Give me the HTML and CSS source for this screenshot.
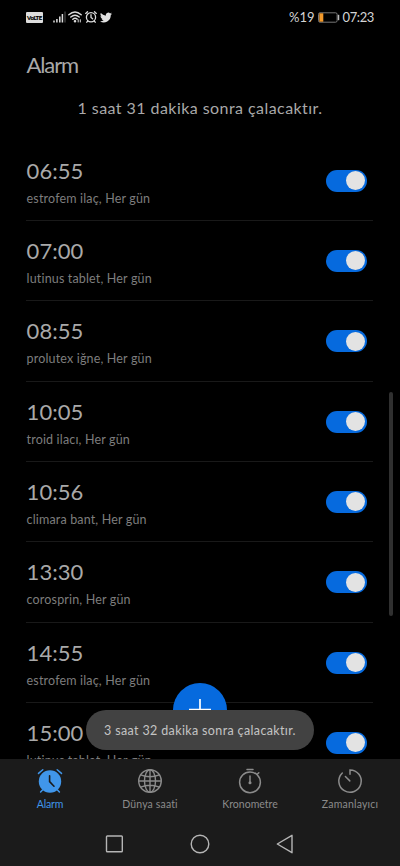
FILE: index.html
```html
<!DOCTYPE html>
<html lang="tr">
<head>
<meta charset="utf-8">
<meta name="viewport" content="width=device-width, initial-scale=1">
<title>Alarm</title>
<link rel="stylesheet" href="styles.css">
</head>
<body>
<div class="screen">
  <header class="status">
    <div class="status-left">
      <span class="volte">VoLTE</span>
      <svg class="signal" width="13" height="12" viewBox="0 0 13 12"><path d="M1 9.5V11.5M3.9 8V11.5M6.8 5.5V11.5M9.4 3V11.5" stroke="#ddd" stroke-width="1.5"/><path d="M12 .5V11.5" stroke="#444" stroke-width="1.3"/></svg>
      <svg class="wifi" width="14" height="12" viewBox="0 0 14 12" fill="none" stroke="#ddd" stroke-width="1.4" stroke-linecap="round"><path d="M.8 3.7Q7-1.7 13.2 3.7M2.8 6Q7 2.4 11.2 6M4.8 8.3Q7 6.4 9.2 8.1"/><circle cx="7" cy="10.3" r=".6" fill="#ddd"/><path d="M10.2 8.7V11M12.3 8.7V11" stroke-width="1"/></svg>
      <svg class="mini-alarm" width="12" height="12" viewBox="0 0 12 12" fill="none" stroke="#ddd" stroke-width="1.3" stroke-linecap="round"><circle cx="6" cy="6.3" r="4.6"/><path d="M6 3.7V6.4L7.6 7.8M.7 2.4L2.5.8M11.3 2.4L9.5.8M2.8 10L1.8 11.2M9.2 10L10.2 11.2"/></svg>
      <svg class="bird" width="12" height="11" viewBox="0 2 24 20" fill="#e2e2e2"><path d="M24 4.6a10 10 0 0 1-2.8.8 5 5 0 0 0 2.1-2.7 10 10 0 0 1-3.1 1.2 4.9 4.9 0 0 0-8.4 4.5A14 14 0 0 1 1.7 3.2a4.9 4.9 0 0 0 1.5 6.5 5 5 0 0 1-2.2-.6 4.9 4.9 0 0 0 3.9 4.9 5 5 0 0 1-2.2.1 4.9 4.9 0 0 0 4.6 3.4A10 10 0 0 1 0 19.500a14 14 0 0 0 21.500-12.400A10 10 0 0 0 24 4.600z"/></svg>
    </div>
    <div class="status-right">
      <span class="percent">%19</span>
      <svg width="22" height="11" viewBox="0 0 22 11"><rect x=".5" y=".8" width="18.600" height="9.400" rx="1.500" fill="none" stroke="#777"/><rect x="1.300" y="1.300" width="4" height="8.400" fill="#f39a2b"/><path d="M20.500 2.800V8.200" stroke="#bbb" stroke-width="1.500"/></svg>
      <span class="clock">07:23</span>
    </div>
  </header>
  <h1 class="title">Alarm</h1>
  <p class="next"><span>1 saat 31 dakika sonra çalacaktır.</span></p>
  <main class="list">
    <section class="row"><div><div class="time">06:55</div><div class="label">estrofem ilaç, Her gün</div></div><span class="switch"></span></section>
    <section class="row"><div><div class="time">07:00</div><div class="label">lutinus tablet, Her gün</div></div><span class="switch"></span></section>
    <section class="row"><div><div class="time">08:55</div><div class="label">prolutex iğne, Her gün</div></div><span class="switch"></span></section>
    <section class="row"><div><div class="time">10:05</div><div class="label">troid ilacı, Her gün</div></div><span class="switch"></span></section>
    <section class="row"><div><div class="time">10:56</div><div class="label">climara bant, Her gün</div></div><span class="switch"></span></section>
    <section class="row"><div><div class="time">13:30</div><div class="label">corosprin, Her gün</div></div><span class="switch"></span></section>
    <section class="row"><div><div class="time">14:55</div><div class="label">estrofem ilaç, Her gün</div></div><span class="switch"></span></section>
    <section class="row"><div><div class="time">15:00</div><div class="label">lutinus tablet, Her gün</div></div><span class="switch"></span></section>
  </main>
  <nav class="tabs">
    <div class="tab active">
      <svg width="28" height="28" viewBox="0 0 28 28" fill="none" stroke="#4096ea" stroke-width="1.500" stroke-linecap="round"><circle cx="14" cy="14.500" r="11.200" fill="#4096ea" stroke="none"/><path d="M2.500 6.400L6.800 2.700M25.500 6.400L21.200 2.700M6.500 23L4.600 25M21.500 23L23.400 25"/><path d="M13.600 8.800V14.600L18 19.200" stroke="#1b1b1b" stroke-width="1.600"/></svg>
      <span class="tab-alarm">Alarm</span>
    </div>
    <div class="tab">
      <svg width="28" height="28" viewBox="0 0 28 28" fill="none" stroke="#8b8b8b" stroke-width="1.400"><circle cx="14" cy="14" r="11.300"/><ellipse cx="14" cy="14" rx="5.500" ry="11.300"/><path d="M14 2.700V25.300M2.700 14H25.300M4.600 7.900Q14 11.500 23.400 7.900M4.600 20.100Q14 16.500 23.400 20.100"/></svg>
      <span class="tab-world">Dünya saati</span>
    </div>
    <div class="tab">
      <svg width="28" height="28" viewBox="0 0 28 28" fill="none" stroke="#8b8b8b" stroke-width="1.500" stroke-linecap="round"><circle cx="14" cy="15.300" r="10.400"/><path d="M11 2.500H17M14 9V15M21.500 7L22.800 5.700"/><circle cx="14" cy="15.700" r=".8" fill="#8b8b8b"/></svg>
      <span>Kronometre</span>
    </div>
    <div class="tab">
      <svg width="28" height="28" viewBox="0 0 28 28" fill="none" stroke="#8b8b8b" stroke-width="1.500" stroke-linecap="round"><path d="M14 7.300V2.900A11.200 11.200 0 1 1 6.300 6M9.400 9.500L13.800 13.900"/></svg>
      <span class="tab-timer">Zamanlayıcı</span>
    </div>
  </nav>
  <footer class="keys">
    <svg width="20" height="20" viewBox="0 0 20 20" fill="none" stroke="#b5b5b5" stroke-width="1.400"><rect x="1.500" y="2" width="15.800" height="15.800" rx=".8"/></svg>
    <svg width="20" height="20" viewBox="0 0 20 20" fill="none" stroke="#b5b5b5" stroke-width="1.400"><circle cx="10" cy="10" r="8.800"/></svg>
    <svg width="20" height="20" viewBox="0 0 20 20" fill="none" stroke="#b5b5b5" stroke-width="1.400" stroke-linejoin="round"><path d="M1.300 10L16 1.300V18.700Z"/></svg>
  </footer>
  <div class="fab"><svg width="24" height="24" viewBox="0 0 24 24"><path d="M12 1V23M1 11.500H23" stroke="#fff" stroke-width="1.700"/></svg></div>
  <div class="toast">3 saat 32 dakika sonra çalacaktır.</div>
  <div class="scrollbar"></div>
</div>
</body>
</html>
```
FILE: styles.css
```css
* { box-sizing: border-box; }
body { margin: 0; background: #000; font-family: Lato, "Noto Sans", sans-serif; font-variant-ligatures: none; }
.screen {
  position: relative;
  display: flex;
  flex-direction: column;
  width: 400px;
  height: 866px;
  overflow: hidden;
  background: #000;
  color: #a9a9a9;
  white-space: nowrap;
}
svg { display: block; flex: none; }

.status {
  display: flex;
  justify-content: space-between;
  align-items: center;
  height: 34px;
  padding: 0 26px;
  color: #d4d4d4;
  flex: none;
}
.status-left, .status-right { display: flex; align-items: center; }
.volte {
  width: 17px;
  height: 11px;
  margin-right: 10px;
  border-radius: 1px;
  background: #ddd;
  color: #000;
  font: 900 6px/11px Lato, sans-serif;
  letter-spacing: -0.4px;
  text-align: center;
  -webkit-text-stroke: 0.15px #000;
}
.signal { margin-right: 2px; }
.wifi { margin-right: 3px; }
.mini-alarm { margin-right: 3px; }
.percent { font-size: 13px; margin-right: 3px; }
.clock { font-size: 13px; margin-left: 3px; letter-spacing: -0.4px; }

.title {
  flex: none;
  margin: 17px 0 0 26.500px;
  height: 28px;
  font-size: 22px;
  line-height: 28px;
  font-weight: 400;
  letter-spacing: -1.1px;
}
.next {
  flex: none;
  margin: 19px 0 0;
  height: 20px;
  font-size: 16px;
  line-height: 20px;
  letter-spacing: 0.440px;
  text-align: center;
}

.list {
  flex: 1 1 0;
  min-height: 0;
  overflow: hidden;
  padding: 22.600px 27px 0 26px;
}
.row {
  display: flex;
  justify-content: space-between;
  height: 80.330px;
  padding: 16px 6px 0 0.600px;
  border-bottom: 1px solid #191919;
}
.time { font-size: 22px; line-height: 28px; letter-spacing: 0.05px; }
.label { margin-top: 5px; font-size: 12.500px; line-height: 18px; letter-spacing: 0.16px; color: #7d7d7d; }
.switch {
  display: flex;
  justify-content: flex-end;
  width: 41px;
  height: 22px;
  margin-top: 13px;
  padding: 1.500px 2px;
  border-radius: 11px;
  background: #066ade;
}
.switch::before {
  content: "";
  width: 19px;
  height: 19px;
  border-radius: 50%;
  background: #e3e3e3;
}

.tabs {
  flex: none;
  display: grid;
  grid-template-columns: repeat(4, 1fr);
  height: 61px;
  padding-top: 8px;
  background: #1b1b1b;
  color: #8b8b8b;
}
.tab { display: flex; flex-direction: column; align-items: center; font-size: 10.500px; line-height: 14px; gap: 2px; }
.active { color: #4096ea; }
.tab-alarm { letter-spacing: -0.15px; }
.tab-world { letter-spacing: 0.15px; }
.tab-timer { letter-spacing: 0.2px; }
.keys {
  flex: none;
  display: flex;
  justify-content: center;
  gap: 65.500px;
  height: 46px;
  padding-top: 13.500px;
  background: #1b1b1b;
}

.fab {
  position: absolute;
  left: 173px;
  top: 683px;
  display: grid;
  place-items: center;
  width: 54px;
  height: 54px;
  border-radius: 50%;
  background: #066ade;
}
.toast {
  position: absolute;
  left: 86px;
  top: 710px;
  width: 228px;
  height: 40px;
  border-radius: 20px;
  background: #424242;
  color: #c4c4c4;
  font-size: 12.500px;
  line-height: 41px;
  letter-spacing: 0.360px;
  text-align: center;
}
.scrollbar {
  position: absolute;
  left: 389px;
  top: 392px;
  width: 4px;
  height: 224px;
  border-radius: 2px;
  background: #303030;
}
```
